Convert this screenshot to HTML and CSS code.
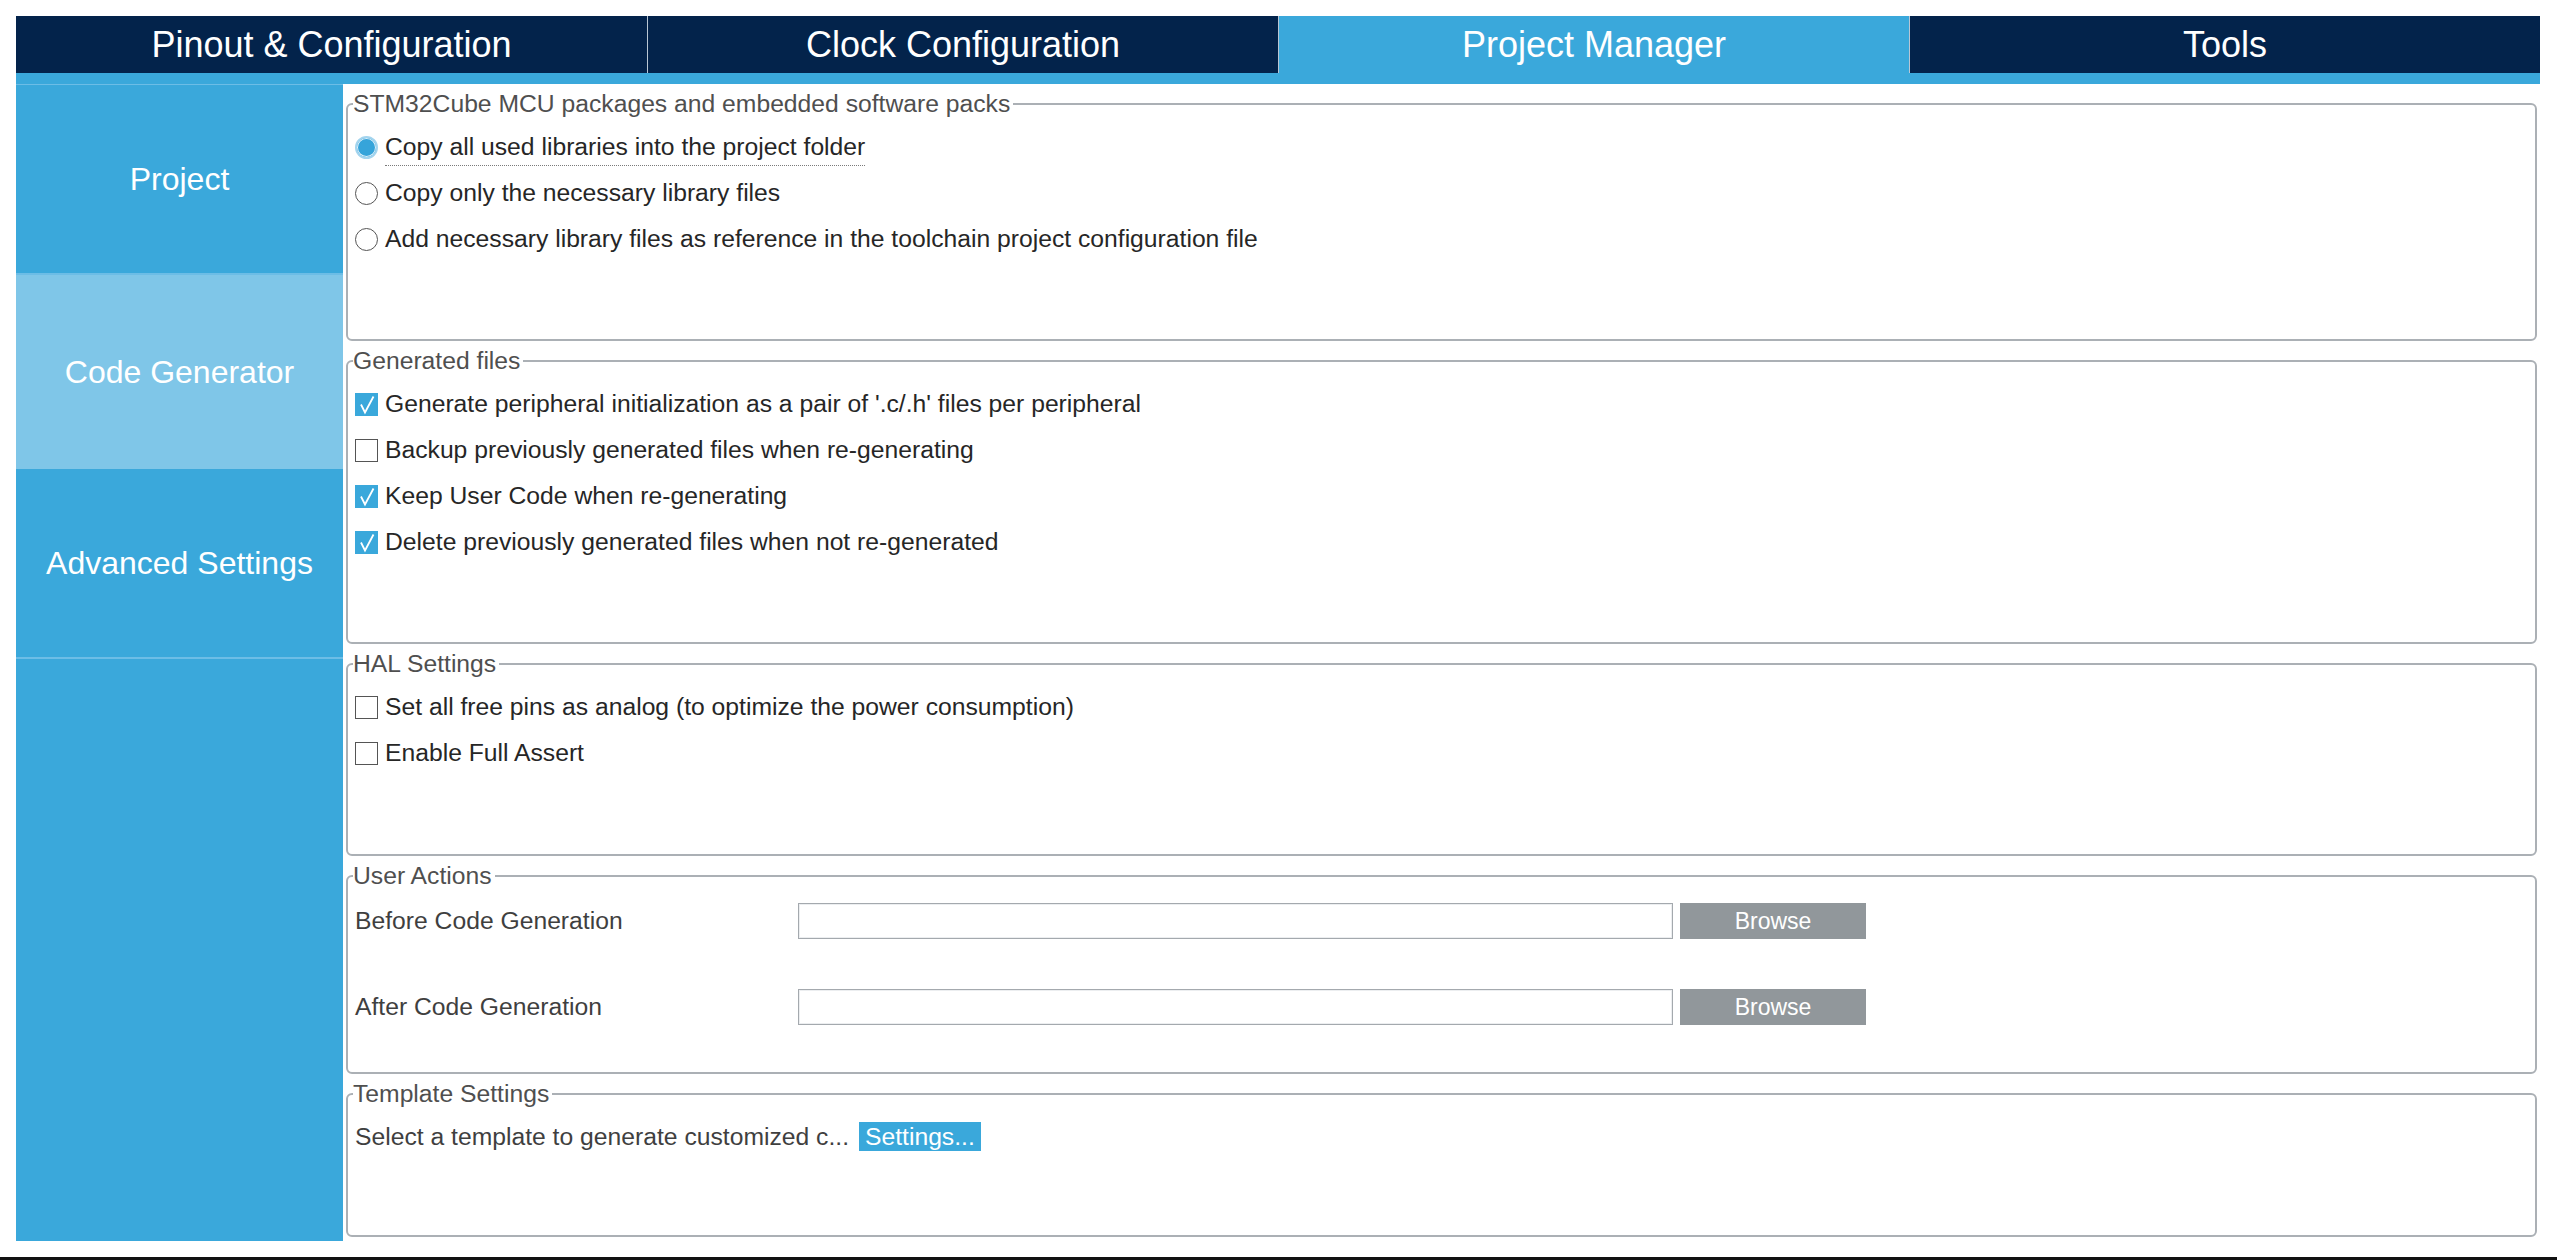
FILE: index.html
```html
<!DOCTYPE html>
<html lang="en">
<head>
<meta charset="utf-8">
<title>Project Manager</title>
<link rel="stylesheet" href="styles.css">
</head>
<body>
<div class="frame">
  <nav class="tabs">
    <div class="tab">Pinout &amp; Configuration</div>
    <div class="tab">Clock Configuration</div>
    <div class="tab active">Project Manager</div>
    <div class="tab">Tools</div>
  </nav>
  <div class="strip"></div>
  <div class="main">
    <aside class="sidebar">
      <div class="side-item first sep">Project</div>
      <div class="side-item selected">Code Generator</div>
      <div class="side-item sep">Advanced Settings</div>
      <div class="side-rest"></div>
    </aside>
    <section class="content">
      <fieldset class="fs fs1">
        <legend>STM32Cube MCU packages and embedded software packs</legend>
        <div class="fs-body">
          <div class="row"><span class="radio on"></span><span class="lbl focus">Copy all used libraries into the project folder</span></div>
          <div class="row"><span class="radio"></span><span class="lbl">Copy only the necessary library files</span></div>
          <div class="row"><span class="radio"></span><span class="lbl">Add necessary library files as reference in the toolchain project configuration file</span></div>
        </div>
      </fieldset>
      <fieldset class="fs fs2">
        <legend>Generated files</legend>
        <div class="fs-body">
          <div class="row"><span class="check on"><svg viewBox="0 0 23 23"><path d="M6 11.5 L10 19.5 L18.5 3.5"/></svg></span><span class="lbl">Generate peripheral initialization as a pair of '.c/.h' files per peripheral</span></div>
          <div class="row"><span class="check"></span><span class="lbl">Backup previously generated files when re-generating</span></div>
          <div class="row"><span class="check on"><svg viewBox="0 0 23 23"><path d="M6 11.5 L10 19.5 L18.5 3.5"/></svg></span><span class="lbl">Keep User Code when re-generating</span></div>
          <div class="row"><span class="check on"><svg viewBox="0 0 23 23"><path d="M6 11.5 L10 19.5 L18.5 3.5"/></svg></span><span class="lbl">Delete previously generated files when not re-generated</span></div>
        </div>
      </fieldset>
      <fieldset class="fs fs3">
        <legend>HAL Settings</legend>
        <div class="fs-body">
          <div class="row"><span class="check"></span><span class="lbl">Set all free pins as analog (to optimize the power consumption)</span></div>
          <div class="row"><span class="check"></span><span class="lbl">Enable Full Assert</span></div>
        </div>
      </fieldset>
      <fieldset class="fs fs4">
        <legend>User Actions</legend>
        <div class="fs-body ua-body">
          <div class="ua-row"><span class="ua-label">Before Code Generation</span><span class="ua-input"></span><span class="browse">Browse</span></div>
          <div class="ua-row"><span class="ua-label">After Code Generation</span><span class="ua-input"></span><span class="browse">Browse</span></div>
        </div>
      </fieldset>
      <fieldset class="fs fs5">
        <legend>Template Settings</legend>
        <div class="fs-body tpl-body">
          <div class="tpl-row"><span class="ua-label-text">Select a template to generate customized c...</span><span class="settings-btn">Settings...</span></div>
        </div>
      </fieldset>
    </section>
  </div>
</div>
<div class="bottom-gap"></div>
<div class="bottom-line"></div>
</body>
</html>
```
FILE: styles.css
```css
html, body {
  margin: 0;
  padding: 0;
  background: #ffffff;
}
body {
  width: 2557px;
  height: 1260px;
  overflow: hidden;
  font-family: "Liberation Sans", Arial, sans-serif;
}
.frame {
  padding: 16px 17px 0 16px;
}
.tabs {
  display: grid;
  grid-template-columns: repeat(4, 1fr);
  height: 57px;
  background: #03234b;
}
.tab {
  display: flex;
  align-items: center;
  justify-content: center;
  color: #ffffff;
  font-size: 36px;
  border-left: 1px solid #b9c6d4;
}
.tab:first-child {
  border-left: none;
}
.tab.active {
  background: #3aa8db;
}
.strip {
  height: 11px;
  background: #3aa8db;
}
.main {
  display: flex;
  height: 1157px;
}
.sidebar {
  width: 327px;
  background: #3aa8db;
  display: flex;
  flex-direction: column;
}
.side-item {
  display: flex;
  align-items: center;
  justify-content: center;
  color: #ffffff;
  font-size: 32px;
  box-sizing: border-box;
}
.side-item.first {
  height: 191px;
  border-top: 1px solid #6cbde6;
}
.side-item.sep {
  border-bottom: 2px solid #6cbde6;
}
.side-item.selected {
  height: 194px;
  background: #7fc6e8;
}
.side-item.sep:not(.first) {
  height: 190px;
}
.side-rest {
  flex: 1;
}
.content {
  flex: 1;
  padding: 7px 3px 0 3px;
  display: flex;
  flex-direction: column;
  gap: 7px;
}
.fs {
  margin: 0;
  padding: 0 7px;
  min-width: 0;
  box-sizing: border-box;
  border: 2px solid #abb0b5;
  border-radius: 6px;
}
.fs legend {
  font-size: 24.7px;
  line-height: 26px;
  color: #4f4f4f;
  padding: 0 3px 0 0;
  margin-left: -2px;
}
.fs1 { height: 250px; }
.fs2 { height: 296px; }
.fs3 { height: 205px; }
.fs4 { height: 211px; }
.fs5 { height: 156px; }
.fs-body {
  padding-top: 7px;
}
.row {
  display: flex;
  align-items: center;
  height: 46px;
  gap: 7px;
}
.lbl {
  font-size: 24.7px;
  color: #262626;
  line-height: 28px;
}
.lbl.focus {
  position: relative;
}
.lbl.focus::after {
  content: "";
  position: absolute;
  left: 0;
  right: 0;
  bottom: -5px;
  border-bottom: 1px dotted #7a7a7a;
}
.radio {
  width: 23px;
  height: 23px;
  box-sizing: border-box;
  border-radius: 50%;
  border: 1.6px solid #555555;
  background: #ffffff;
  flex: none;
}
.radio.on {
  border: 2px solid #a3d4ee;
  background: #36a4da;
  box-shadow: inset 0 0 0 1px #e3f2fa;
}
.check {
  width: 23px;
  height: 23px;
  box-sizing: border-box;
  border: 1.6px solid #555555;
  background: #ffffff;
  flex: none;
  display: flex;
}
.check.on {
  border: none;
  background: #3aa8db;
}
.check svg {
  width: 23px;
  height: 23px;
}
.check svg path {
  fill: none;
  stroke: #ffffff;
  stroke-width: 1.8;
}
.ua-body {
  padding-top: 14px;
  display: flex;
  flex-direction: column;
  gap: 50px;
}
.ua-row {
  display: flex;
  align-items: center;
  height: 36px;
}
.ua-label {
  width: 443px;
  font-size: 24.7px;
  color: #3f3f3f;
}
.ua-input {
  width: 875px;
  height: 36px;
  box-sizing: border-box;
  border: 1px solid #a4a9ae;
  box-shadow: inset 0 0 0 1px #eceef0;
  background: #ffffff;
}
.browse {
  margin-left: 7px;
  width: 186px;
  height: 36px;
  background: #91979b;
  color: #ffffff;
  font-size: 23px;
  display: flex;
  align-items: center;
  justify-content: center;
}
.tpl-body {
  padding-top: 15px;
}
.tpl-row {
  display: flex;
  align-items: center;
  height: 29px;
}
.ua-label-text {
  font-size: 24.7px;
  color: #3f3f3f;
}
.settings-btn {
  margin-left: 10px;
  height: 29px;
  padding: 0 6px;
  background: #3aa8db;
  color: #ffffff;
  font-size: 24.7px;
  line-height: 29px;
}
.bottom-gap {
  height: 16px;
}
.bottom-line {
  height: 3px;
  background: #111111;
}
```
